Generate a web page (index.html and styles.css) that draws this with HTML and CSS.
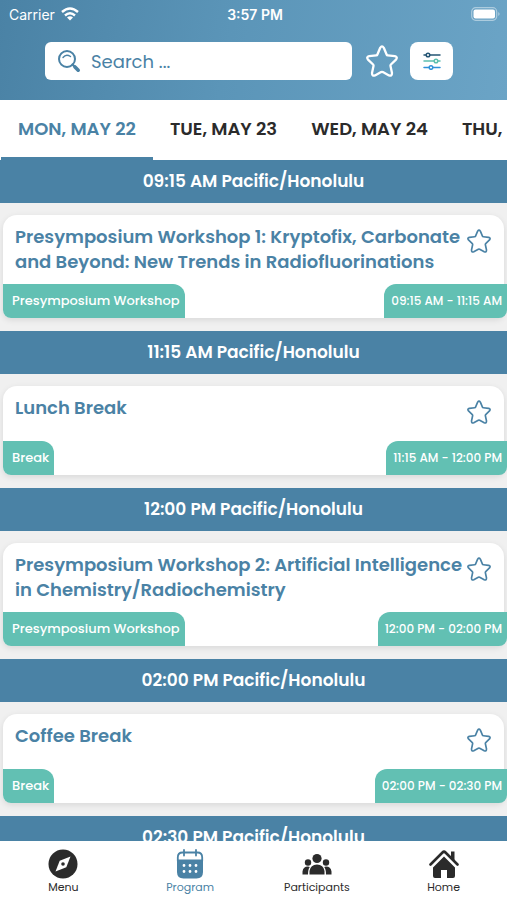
FILE: index.html
```html
<!DOCTYPE html>
<html lang="en">
<head>
<meta charset="UTF-8" />
<meta name="viewport" content="width=device-width, initial-scale=1" />
<title>Program</title>
<link rel="stylesheet" href="styles.css">
</head>
<body>
  <!-- shared star outline -->
  <svg class="defs" aria-hidden="true">
    <symbol id="star" viewBox="0 0 32 32">
      <path d="M14.2 2.800Q16 0 17.800 2.800L20.600 9.500Q20.900 10.300 21.800 10.400L28.800 11.200Q32 12 30 14.600L24.900 19.500Q24.300 20.200 24.500 21L26 28Q26 31.500 23 30.400L16.900 27.100Q16 26.700 15.100 27.100L9 30.400Q6 31.500 6 28L7.500 21Q7.700 20.200 7.100 19.500L2 14.600Q0 12 3.200 11.200L10.200 10.400Q11.100 10.300 11.400 9.500Z" fill="none" stroke="currentColor" stroke-linejoin="round"/>
    </symbol>
  </svg>

  <header class="header">
    <div class="status">
      <div class="carrier">
        <span>Carrier</span>
        <svg width="18" height="14" viewBox="0 0 18 14" fill="none" stroke="#fff" stroke-width="2.4">
          <path d="M1 5Q9-2 17 5M4 8.5Q9 4 14 8.5"/>
          <path d="M6 10.5Q9 8 12 10.5L9 13.5Z" fill="#fff" stroke="none"/>
        </svg>
      </div>
      <div class="clock">3:57 PM</div>
      <div class="battery">
        <svg width="30" height="14" viewBox="0 0 30 14">
          <rect x=".7" y=".7" width="25" height="12.6" rx="4" fill="none" stroke="#fff" stroke-opacity=".45" stroke-width="1.2"/>
          <rect x="2.5" y="2.5" width="21.5" height="9" rx="2" fill="#fff"/>
          <path d="M27.3 5Q29.8 7 27.3 9Z" fill="#fff" fill-opacity=".5"/>
        </svg>
      </div>
    </div>
    <div class="toolbar">
      <label class="search">
        <svg width="24" height="24" viewBox="0 0 24 24" fill="none" stroke="currentColor" stroke-linecap="round">
          <circle cx="10" cy="10" r="8" stroke-width="2"/>
          <path d="M6 8.5Q9 4.5 13.5 7.500" stroke-width="1.4"/>
          <path d="M15.500 15.500L18 18" stroke-width="2.400"/>
          <path d="M18 18L21.200 21.200" stroke-width="3.600"/>
        </svg>
        <input type="text" placeholder="Search ..." aria-label="Search">
      </label>
      <button class="favorites" aria-label="Favorites"><svg width="32" height="32" stroke-width="2.3"><use href="#star"/></svg></button>
      <button class="filter" aria-label="Filter">
        <svg width="18" height="18" viewBox="0 0 18 18" fill="#fff" stroke-width="1.5" stroke-linecap="round">
          <g stroke="#245574"><path d="M1 3H17"/><circle cx="5" cy="3" r="1.8"/></g>
          <g stroke="#5cbfae"><path d="M1 9H17"/><circle cx="13" cy="9" r="1.8"/></g>
          <g stroke="#2f91d8"><path d="M1 15.5H17"/><circle cx="8" cy="15.5" r="1.8"/></g>
        </svg>
      </button>
    </div>
  </header>

  <nav class="days">
    <button class="day active">MON, MAY 22</button>
    <button class="day">TUE, MAY 23</button>
    <button class="day">WED, MAY 24</button>
    <button class="day">THU, MAY 25</button>
  </nav>

  <main class="schedule">
    <section class="slot">
      <h2>09:15 AM Pacific/Honolulu</h2>
      <article class="card">
        <div class="card-top">
          <h3>Presymposium Workshop 1: Kryptofix, Carbonate and Beyond: New Trends in Radiofluorinations</h3>
          <button class="star" aria-label="Add to favorites"><svg width="24" height="24" stroke-width="2.2"><use href="#star"/></svg></button>
        </div>
        <div class="card-bottom">
          <span class="type">Presymposium Workshop</span>
          <span class="time">09:15 AM - 11:15 AM</span>
        </div>
      </article>
    </section>

    <section class="slot">
      <h2>11:15 AM Pacific/Honolulu</h2>
      <article class="card">
        <div class="card-top">
          <h3>Lunch Break</h3>
          <button class="star" aria-label="Add to favorites"><svg width="24" height="24" stroke-width="2.2"><use href="#star"/></svg></button>
        </div>
        <div class="card-bottom">
          <span class="type">Break</span>
          <span class="time">11:15 AM - 12:00 PM</span>
        </div>
      </article>
    </section>

    <section class="slot">
      <h2>12:00 PM Pacific/Honolulu</h2>
      <article class="card">
        <div class="card-top">
          <h3>Presymposium Workshop 2: Artificial Intelligence in Chemistry/Radiochemistry</h3>
          <button class="star" aria-label="Add to favorites"><svg width="24" height="24" stroke-width="2.2"><use href="#star"/></svg></button>
        </div>
        <div class="card-bottom">
          <span class="type">Presymposium Workshop</span>
          <span class="time">12:00 PM - 02:00 PM</span>
        </div>
      </article>
    </section>

    <section class="slot">
      <h2>02:00 PM Pacific/Honolulu</h2>
      <article class="card">
        <div class="card-top">
          <h3>Coffee Break</h3>
          <button class="star" aria-label="Add to favorites"><svg width="24" height="24" stroke-width="2.2"><use href="#star"/></svg></button>
        </div>
        <div class="card-bottom">
          <span class="type">Break</span>
          <span class="time">02:00 PM - 02:30 PM</span>
        </div>
      </article>
    </section>

    <section class="slot">
      <h2>02:30 PM Pacific/Honolulu</h2>
    </section>
  </main>

  <nav class="bottom-nav">
    <a href="#menu">
      <svg width="30" height="30" viewBox="0 0 30 30">
        <circle cx="15" cy="15" r="14.5" fill="currentColor"/>
        <path d="M22.5 7.5L18.3 18.3L7.5 22.5L11.7 11.7Z" fill="#fff"/>
        <circle cx="15" cy="15" r="1.8" fill="currentColor"/>
      </svg>
      <span>Menu</span>
    </a>
    <a href="#program" class="active">
      <svg width="30" height="30" viewBox="0 0 30 30">
        <path d="M2 10.5H28V23Q28 29.5 21.5 29.5H8.5Q2 29.5 2 23Z" fill="currentColor"/>
        <path d="M2.800 12V8.500Q2.800 3.500 7.500 3.500H22.500Q27.200 3.500 27.200 8.500V12M9 1V6.500M21 1V6.500" fill="none" stroke="currentColor" stroke-width="1.800" stroke-linecap="round"/>
        <path d="M9 16.500H9.010M15 16.500H15.010M21 16.500H21.010M9 22.500H9.010M15 22.500H15.010M21 22.500H21.010" stroke="#fff" stroke-width="2.800" stroke-linecap="round"/>
      </svg>
      <span>Program</span>
    </a>
    <a href="#participants">
      <svg width="30" height="30" viewBox="0 0 30 30" fill="currentColor">
        <circle cx="15" cy="9.5" r="4.6"/>
        <circle cx="6" cy="13.5" r="3.2"/>
        <circle cx="24" cy="13.5" r="3.2"/>
        <path d="M7.500 25.500V22Q8.500 15.500 15 15.500T22.500 22V25.500ZM.5 25.500V22.500Q1.200 17.600 6 17.600L7.800 18Q6 20 6 25.500ZM29.500 25.500V22.500Q28.800 17.600 24 17.600L22.200 18Q24 20 24 25.500Z"/>
      </svg>
      <span>Participants</span>
    </a>
    <a href="#home">
      <svg width="30" height="30" viewBox="0 0 30 30" fill="currentColor">
        <path d="M1.500 15.500L13.500 3.500Q15 2 16.500 3.500L28.500 15.500" fill="none" stroke="currentColor" stroke-width="2.600" stroke-linecap="round"/>
        <path d="M22 2.500H25.500V12L22 8.500Z"/>
        <path d="M15 7.500L26 18.500V27Q26 29 24 29H18V21H12V29H6Q4 29 4 27V18.500Z"/>
      </svg>
      <span>Home</span>
    </a>
  </nav>
</body>
</html>
```
FILE: styles.css
```css
* {
  box-sizing: border-box;
}
body {
  margin: 0;
  height: 100vh;
  display: flex;
  flex-direction: column;
  background: #f0f0f0;
  color: #2b2b2b;
  font-family: Poppins, Inter, sans-serif;
}
button {
  border: none;
  padding: 0;
  background: none;
  color: inherit;
  font: inherit;
  cursor: pointer;
}
svg {
  display: block;
  flex-shrink: 0;
}
.defs {
  position: absolute;
  width: 0;
  height: 0;
}

/* header */
.header {
  flex-shrink: 0;
  height: 100px;
  background: linear-gradient(100deg, #4a82a5 0%, #5b95b8 45%, #6ba4c6 100%);
  color: #fff;
}
.status {
  display: grid;
  grid-template-columns: 1fr auto 1fr;
  align-items: center;
  height: 28px;
  padding: 0 6px 0 9px;
  font-family: Inter, sans-serif;
  font-size: 14px;
}
.carrier {
  display: flex;
  align-items: center;
  gap: 6px;
}
.clock {
  font-weight: 600;
}
.battery {
  justify-self: end;
}
.toolbar {
  display: flex;
  align-items: center;
  margin-top: 14px;
  padding: 0 54px 0 45px;
}
.search {
  flex: 1;
  min-width: 0;
  display: flex;
  align-items: center;
  gap: 10px;
  height: 38px;
  padding: 0 12px;
  border-radius: 6px;
  background: #fff;
  color: #4a82a5;
}
.search input {
  flex: 1;
  min-width: 0;
  border: none;
  outline: none;
  padding: 0;
  background: none;
  color: inherit;
  font: inherit;
  font-size: 18px;
}
.search input::placeholder {
  color: #4a82a5;
  opacity: 1;
}
.favorites {
  margin: 0 12px 0 14px;
}
.filter {
  display: flex;
  align-items: center;
  justify-content: center;
  width: 43px;
  height: 38px;
  border-radius: 8px;
  background: #fff;
}

/* day tabs */
.days {
  flex-shrink: 0;
  display: flex;
  height: 60px;
  padding-left: 1px;
  overflow: hidden;
  background: #fff;
}
.day {
  flex-shrink: 0;
  padding: 0 17px;
  border-bottom: 3px solid transparent;
  font-size: 18px;
  font-weight: 600;
  white-space: nowrap;
}
.day.active {
  color: #4a82a5;
  border-bottom-color: #4a82a5;
}

/* schedule */
.schedule {
  flex: 1;
  min-height: 0;
  overflow: hidden;
}
.slot h2 {
  margin: 0;
  background: #4a82a5;
  color: #fff;
  font-size: 17px;
  font-weight: 600;
  line-height: 43px;
  text-align: center;
}
.card {
  margin: 12px 3px 13px;
  border-radius: 14px 14px 8px 8px;
  background: #fff;
  box-shadow: 0 2px 6px rgba(0,0,0,0.1);
}
.card-top {
  display: flex;
  align-items: flex-start;
  justify-content: space-between;
  min-height: 55px;
  padding: 9px 13px 10px 12px;
}
.card h3 {
  margin: 0;
  color: #4a82a5;
  font-size: 18px;
  font-weight: 600;
  line-height: 25px;
}
.star {
  margin-top: 5px;
  color: #4a82a5;
}
.card-bottom {
  display: flex;
  justify-content: space-between;
  margin-right: -3px;
  color: #fff;
  font-weight: 500;
  line-height: 34px;
}
.type,
.time {
  background: #62c0b3;
}
.type {
  padding: 0 5px 0 9px;
  border-radius: 0 12px 0 8px;
  font-size: 13px;
}
.time {
  padding: 0 5px 0 7px;
  border-radius: 12px 0 8px 0;
  font-size: 12px;
}

/* bottom navigation */
.bottom-nav {
  flex-shrink: 0;
  display: flex;
  height: 59px;
  padding-top: 8px;
  background: #fff;
}
.bottom-nav a {
  flex: 1;
  display: flex;
  flex-direction: column;
  align-items: center;
  color: #2b2b2b;
  font-size: 11px;
  line-height: 16px;
  text-decoration: none;
}
.bottom-nav a.active {
  color: #4a82a5;
}
```
